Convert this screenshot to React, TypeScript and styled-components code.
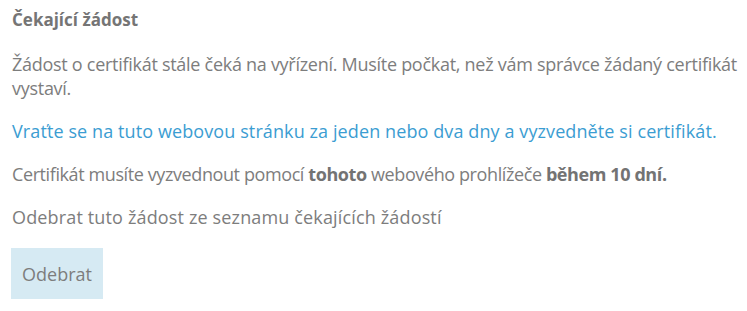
import React from 'react'
import styled, { createGlobalStyle } from 'styled-components'

const GlobalStyle = createGlobalStyle`
  html, body {
    margin: 0;
    padding: 0;
    background: #fff;
    overflow: hidden;
  }
  body {
    font-family: "Open Sans", "Noto Sans", sans-serif;
    font-size: 18px;
    color: #7d7d7d;
  }
`

const Page = styled.div`
  padding: 8px 0 10px 12px;
  width: 727px;
`

const Title = styled.h2`
  margin: 0 0 20px 0;
  font-size: 17px;
  font-weight: 700;
  color: #757575;
  line-height: 24px;
`

// spacing tunes the run length of each paragraph
const Text = styled.p<{ $link?: boolean; $spacing?: number }>`
  margin: 0 0 19px 0;
  line-height: 24px;
  letter-spacing: ${({ $spacing = 0 }) => $spacing}px;
  color: ${({ $link }) => ($link ? '#3b9dd2' : '#7d7d7d')};
`

const Strong = styled.b`
  font-weight: 700;
  color: #737373;
`

const Button = styled.button`
  display: block;
  margin: 2px 0 0 -1px;
  width: 92px;
  height: 51px;
  padding: 0;
  border: none;
  background: #d6eaf3;
  color: #7d7d7d;
  font-family: inherit;
  font-size: 18px;
  cursor: pointer;
`

const App = () => {
  return (
    <Page>
      <GlobalStyle />
      <Title>Čekající žádost</Title>
      <Text $spacing={-0.28}>
        Žádost o certifikát stále čeká na vyřízení. Musíte počkat, než vám správce žádaný certifikát vystaví.
      </Text>
      <Text $link $spacing={0.1}>
        Vraťte se na tuto webovou stránku za jeden nebo dva dny a vyzvedněte si certifikát.
      </Text>
      <Text $spacing={-0.4}>
        Certifikát musíte vyzvednout pomocí <Strong>tohoto</Strong> webového prohlížeče <Strong>během 10 dní.</Strong>
      </Text>
      <Text $spacing={0.15}>Odebrat tuto žádost ze seznamu čekajících žádostí</Text>
      <Button>Odebrat</Button>
    </Page>
  )
}

export default App
